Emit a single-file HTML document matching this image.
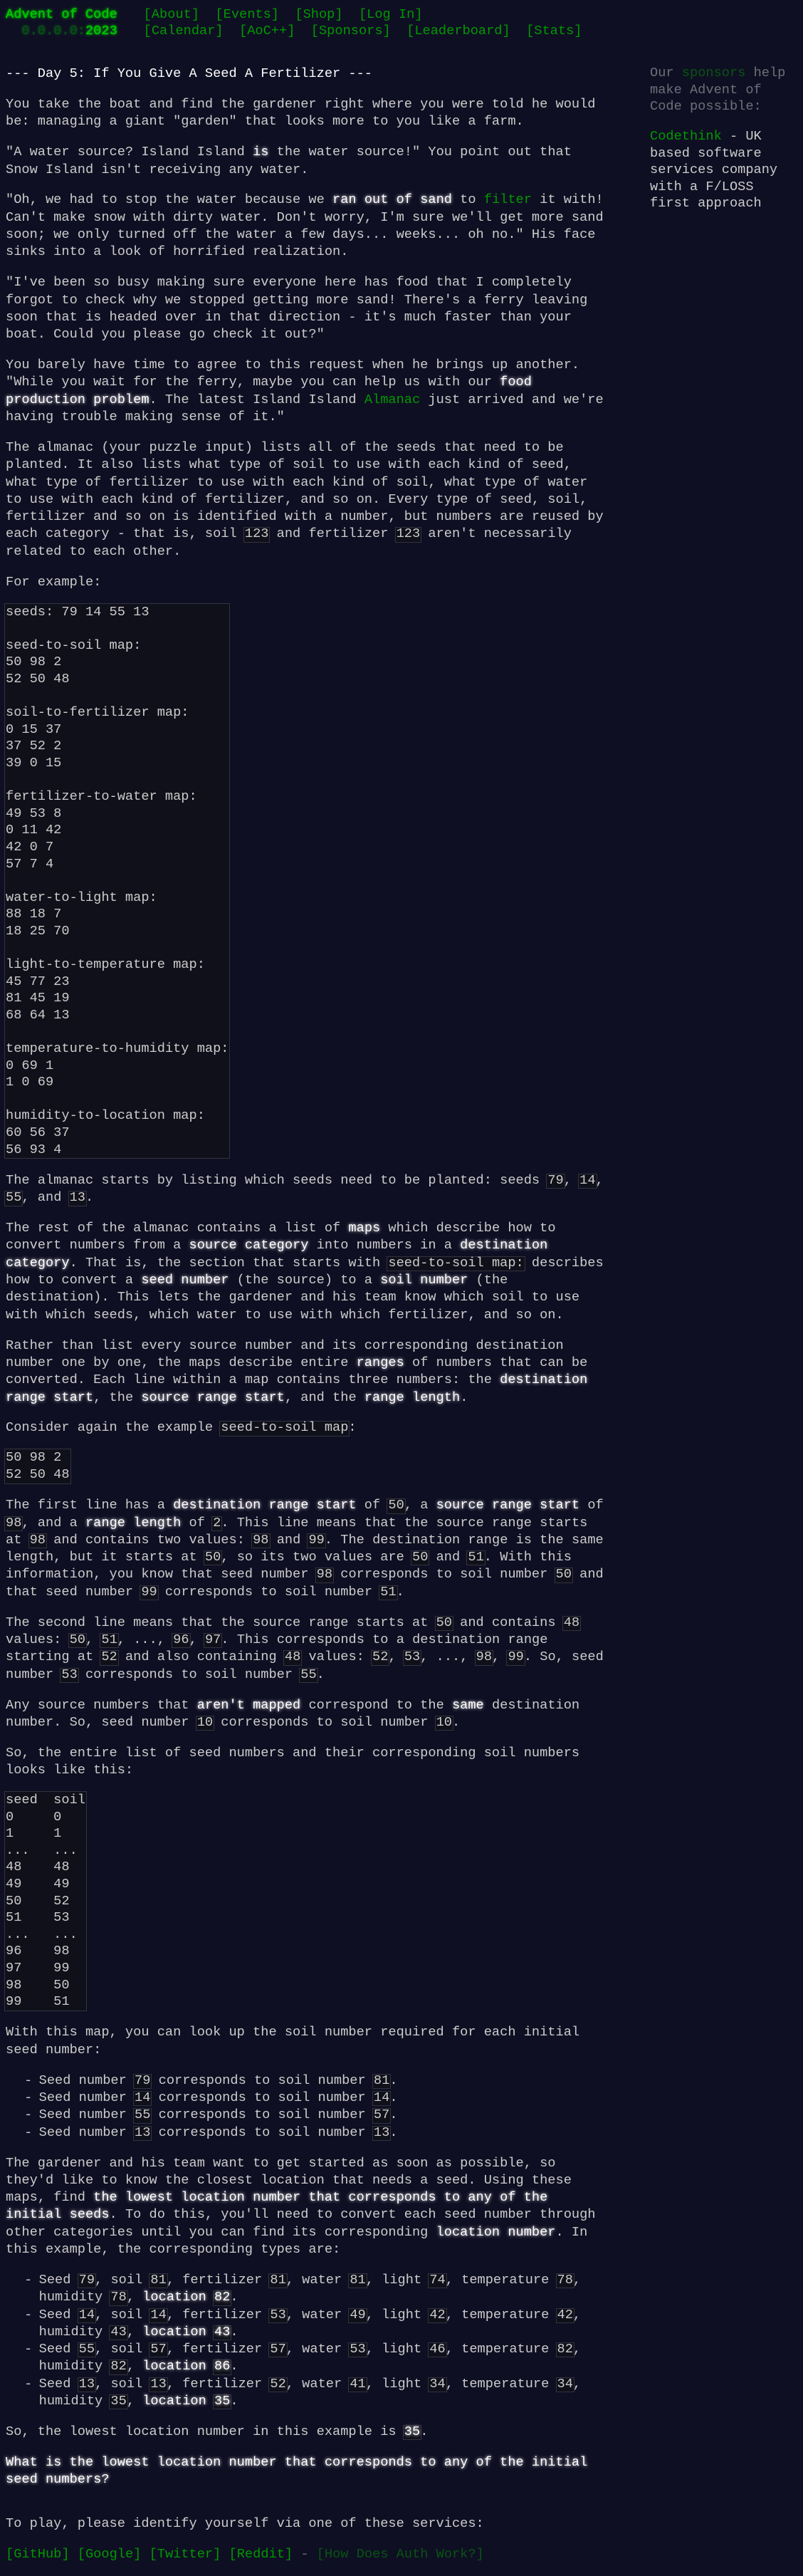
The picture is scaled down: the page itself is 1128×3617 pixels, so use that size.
<!DOCTYPE html>
<html><head><meta charset="utf-8"><title>Day 5 - Advent of Code 2023</title>
<style>
*{box-sizing:content-box}
body{background:#0f0f23;color:#cccccc;font-family:"Liberation Mono",monospace;font-size:14pt;line-height:24.3px;margin:8px;min-width:60em}
a{color:#009900;text-decoration:none}
header{white-space:nowrap;margin-bottom:37px;position:relative}
header h1{display:inline-block;margin:0;padding-right:1em;font-size:1em;font-weight:normal;line-height:23px}
header h1 a,header h1 .g{color:#00cc00;text-shadow:0 0 2px #00cc00,0 0 5px #00cc00}
header .row{height:23px}
header .lbl{display:inline-block;width:175px}
.wrap{opacity:.33;color:#00cc00;text-shadow:0 0 2px #00cc00,0 0 5px #00cc00}
header nav{display:inline-block}
header nav ul{list-style:none;padding:0;margin:0;display:inline}
header nav li{display:inline-block;padding:0 .6em 0 0}
#sidebar{width:200px;float:right;margin:0 15px 2em 2em;position:relative;z-index:10;line-height:23.5px}
#sidebar p{margin:0 0 1em 0}
.quiet{opacity:.5}
main{display:block}
article{width:45em;margin-bottom:2em}
article h2{color:#fff;margin:0 0 18.67px 0;font-size:1em;font-weight:normal;white-space:nowrap;line-height:24.3px}
article p{margin:0 0 18.67px 0}
em{color:#fff;font-style:normal;text-shadow:0 0 5px #fff}
code{position:relative;display:inline-block;margin:0;padding:0;font-family:"Liberation Mono",monospace;font-size:1em}
code:before{z-index:-1;content:"";position:absolute;display:block;left:-2px;right:-2px;top:3px;bottom:0;border:1px solid #333340;background:#10101a}
code em{text-shadow:0 0 5px #fff}
pre{margin:0 0 18.67px 0;line-height:23.6px;font-family:"Liberation Mono",monospace;font-size:1em}
pre code{display:inline-block}
pre code:before{top:-1px;bottom:-1px}
article ul{list-style:none;padding:0;margin:0 0 18.67px 0}
article li{padding-left:2.5em;position:relative}
article li:before{content:"-";position:absolute;left:1.4em}
</style></head><body>
<header>
<div class="row"><h1><a href="#" class="lbl">Advent of Code</a></h1><nav><ul><li><a href="#">[About]</a></li> <li><a href="#">[Events]</a></li> <li><a href="#">[Shop]</a></li> <li><a href="#">[Log In]</a></li></ul></nav></div>
<div class="row"><h1><span class="lbl">&nbsp;&nbsp;<span class="wrap">0.0.0.0:</span><span class="g">2023</span></span></h1><nav><ul><li><a href="#">[Calendar]</a></li> <li><a href="#">[AoC++]</a></li> <li><a href="#">[Sponsors]</a></li> <li><a href="#">[Leaderboard]</a></li> <li><a href="#">[Stats]</a></li></ul></nav></div>
</header>
<div id="sidebar">
<p class="quiet">Our <a href="#">sponsors</a> help make Advent of Code possible:</p>
<p><a href="#">Codethink</a> - UK based software services company with a F/LOSS first approach</p>
</div>
<main>
<article>
<h2>--- Day 5: If You Give A Seed A Fertilizer ---</h2>
<p>You take the boat and find the gardener right where you were told he would be: managing a giant "garden" that looks more to you like a farm.</p>
<p>"A water source? Island Island <em>is</em> the water source!" You point out that Snow Island isn't receiving any water.</p>
<p>"Oh, we had to stop the water because we <em>ran out of sand</em> to <a href="#">filter</a> it with! Can't make snow with dirty water. Don't worry, I'm sure we'll get more sand soon; we only turned off the water a few days... weeks... oh no." His face sinks into a look of horrified realization.</p>
<p>"I've been so busy making sure everyone here has food that I completely forgot to check why we stopped getting more sand! There's a ferry leaving soon that is headed over in that direction - it's much faster than your boat. Could you please go check it out?"</p>
<p>You barely have time to agree to this request when he brings up another. "While you wait for the ferry, maybe you can help us with our <em>food production problem</em>. The latest Island Island <a href="#">Almanac</a> just arrived and we're having trouble making sense of it."</p>
<p>The almanac (your puzzle input) lists all of the seeds that need to be planted. It also lists what type of soil to use with each kind of seed, what type of fertilizer to use with each kind of soil, what type of water to use with each kind of fertilizer, and so on. Every type of seed, soil, fertilizer and so on is identified with a number, but numbers are reused by each category - that is, soil <code>123</code> and fertilizer <code>123</code> aren't necessarily related to each other.</p>
<p>For example:</p>
<pre><code>seeds: 79 14 55 13

seed-to-soil map:
50 98 2
52 50 48

soil-to-fertilizer map:
0 15 37
37 52 2
39 0 15

fertilizer-to-water map:
49 53 8
0 11 42
42 0 7
57 7 4

water-to-light map:
88 18 7
18 25 70

light-to-temperature map:
45 77 23
81 45 19
68 64 13

temperature-to-humidity map:
0 69 1
1 0 69

humidity-to-location map:
60 56 37
56 93 4
</code></pre>
<p>The almanac starts by listing which seeds need to be planted: seeds <code>79</code>, <code>14</code>, <code>55</code>, and <code>13</code>.</p>
<p>The rest of the almanac contains a list of <em>maps</em> which describe how to convert numbers from a <em>source category</em> into numbers in a <em>destination category</em>. That is, the section that starts with <code>seed-to-soil map:</code> describes how to convert a <em>seed number</em> (the source) to a <em>soil number</em> (the destination). This lets the gardener and his team know which soil to use with which seeds, which water to use with which fertilizer, and so on.</p>
<p>Rather than list every source number and its corresponding destination number one by one, the maps describe entire <em>ranges</em> of numbers that can be converted. Each line within a map contains three numbers: the <em>destination range start</em>, the <em>source range start</em>, and the <em>range length</em>.</p>
<p>Consider again the example <code>seed-to-soil map</code>:</p>
<pre><code>50 98 2
52 50 48
</code></pre>
<p>The first line has a <em>destination range start</em> of <code>50</code>, a <em>source range start</em> of <code>98</code>, and a <em>range length</em> of <code>2</code>. This line means that the source range starts at <code>98</code> and contains two values: <code>98</code> and <code>99</code>. The destination range is the same length, but it starts at <code>50</code>, so its two values are <code>50</code> and <code>51</code>. With this information, you know that seed number <code>98</code> corresponds to soil number <code>50</code> and that seed number <code>99</code> corresponds to soil number <code>51</code>.</p>
<p>The second line means that the source range starts at <code>50</code> and contains <code>48</code> values: <code>50</code>, <code>51</code>, ..., <code>96</code>, <code>97</code>. This corresponds to a destination range starting at <code>52</code> and also containing <code>48</code> values: <code>52</code>, <code>53</code>, ..., <code>98</code>, <code>99</code>. So, seed number <code>53</code> corresponds to soil number <code>55</code>.</p>
<p>Any source numbers that <em>aren't mapped</em> correspond to the <em>same</em> destination number. So, seed number <code>10</code> corresponds to soil number <code>10</code>.</p>
<p>So, the entire list of seed numbers and their corresponding soil numbers looks like this:</p>
<pre><code>seed  soil
0     0
1     1
...   ...
48    48
49    49
50    52
51    53
...   ...
96    98
97    99
98    50
99    51
</code></pre>
<p>With this map, you can look up the soil number required for each initial seed number:</p>
<ul>
<li>Seed number <code>79</code> corresponds to soil number <code>81</code>.</li>
<li>Seed number <code>14</code> corresponds to soil number <code>14</code>.</li>
<li>Seed number <code>55</code> corresponds to soil number <code>57</code>.</li>
<li>Seed number <code>13</code> corresponds to soil number <code>13</code>.</li>
</ul>
<p>The gardener and his team want to get started as soon as possible, so they'd like to know the closest location that needs a seed. Using these maps, find <em>the lowest location number that corresponds to any of the initial seeds</em>. To do this, you'll need to convert each seed number through other categories until you can find its corresponding <em>location number</em>. In this example, the corresponding types are:</p>
<ul>
<li>Seed <code>79</code>, soil <code>81</code>, fertilizer <code>81</code>, water <code>81</code>, light <code>74</code>, temperature <code>78</code>, humidity <code>78</code>, <em>location <code>82</code></em>.</li>
<li>Seed <code>14</code>, soil <code>14</code>, fertilizer <code>53</code>, water <code>49</code>, light <code>42</code>, temperature <code>42</code>, humidity <code>43</code>, <em>location <code>43</code></em>.</li>
<li>Seed <code>55</code>, soil <code>57</code>, fertilizer <code>57</code>, water <code>53</code>, light <code>46</code>, temperature <code>82</code>, humidity <code>82</code>, <em>location <code>86</code></em>.</li>
<li>Seed <code>13</code>, soil <code>13</code>, fertilizer <code>52</code>, water <code>41</code>, light <code>34</code>, temperature <code>34</code>, humidity <code>35</code>, <em>location <code>35</code></em>.</li>
</ul>
<p>So, the lowest location number in this example is <code><em>35</em></code>.</p>
<p><em>What is the lowest location number that corresponds to any of the initial seed numbers?</em></p>
</article>
<p>To play, please identify yourself via one of these services:</p>
<p><a href="#">[GitHub]</a> <a href="#">[Google]</a> <a href="#">[Twitter]</a> <a href="#">[Reddit]</a> <span class="quiet">- <a href="#">[How Does Auth Work?]</a></span></p>
</main>
</body></html>
